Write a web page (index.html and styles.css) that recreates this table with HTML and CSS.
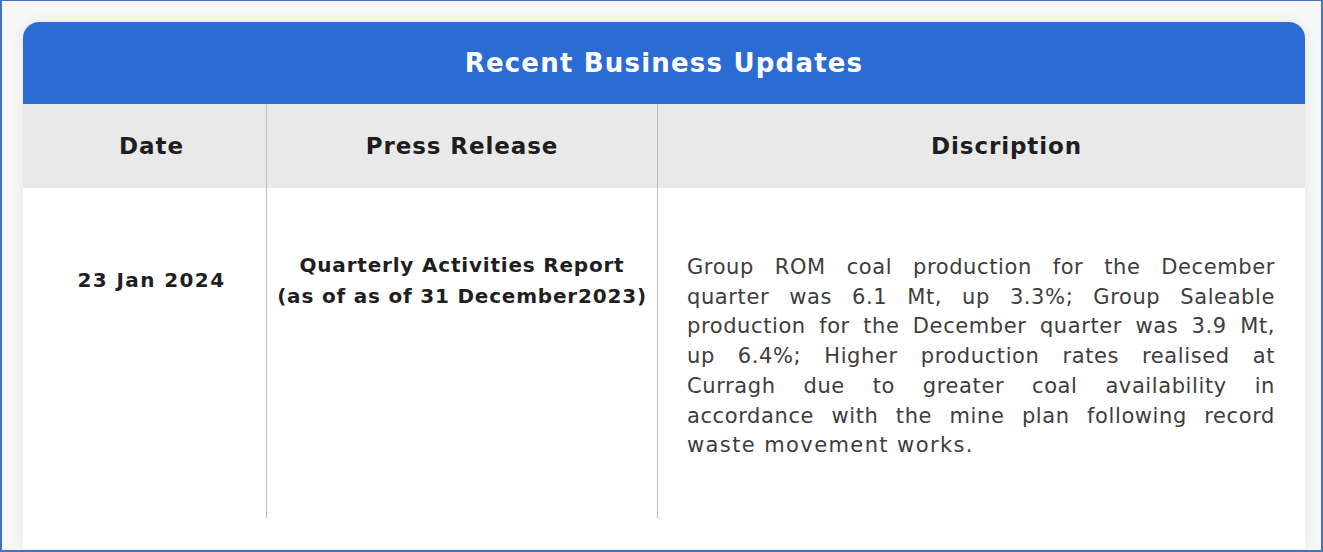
FILE: index.html
```html
<!DOCTYPE html>
<html>
<head>
<meta charset="utf-8">
<link rel="stylesheet" href="styles.css">
</head>
<body>
<div class="frame">
  <div class="card">
    <div class="title">Recent Business Updates</div>
    <div class="table">
      <div class="th c1">Date</div>
      <div class="th bl">Press Release</div>
      <div class="th bl c3">Discription</div>
      <div class="td date c1">23 Jan 2024</div>
      <div class="td press bl">Quarterly Activities Report<br>(as of as of 31 December2023)</div>
      <div class="td desc bl">
        <span class="ln">Group ROM coal production for the December</span>
        <span class="ln">quarter was 6.1 Mt, up 3.3%; Group Saleable</span>
        <span class="ln">production for the December quarter was 3.9 Mt,</span>
        <span class="ln">up 6.4%; Higher production rates realised at</span>
        <span class="ln">Curragh due to greater coal availability in</span>
        <span class="ln">accordance with the mine plan following record</span>
        <span class="ln last">waste movement works.</span>
      </div>
    </div>
  </div>
</div>
</body>
</html>
```

FILE: styles.css
```css
html, body {
  margin: 0;
  padding: 0;
}
body {
  width: 1323px;
  height: 552px;
  overflow: hidden;
  font-family: "DejaVu Sans", sans-serif;
}
.frame {
  box-sizing: border-box;
  width: 1323px;
  height: 552px;
  border: 2px solid #4472c4;
  border-top-width: 1px;
  background: #f7f7f7;
  padding: 21px 16px 0 21px;
}
.card {
  background: #ffffff;
  border-radius: 16px 16px 0 0;
  height: 527px;
  box-shadow: 0 0 14px rgba(0, 0, 0, 0.07);
}
.title {
  height: 82px;
  background: #2c6bd3;
  border-radius: 16px 16px 0 0;
  color: #ffffff;
  font-weight: bold;
  font-size: 26px;
  letter-spacing: 1.2px;
  display: flex;
  align-items: center;
  justify-content: center;
}
.table {
  display: grid;
  grid-template-columns: 243px 391px 1fr;
  grid-template-rows: 84px 330px;
}
.th {
  background: #e9e9e9;
  display: flex;
  align-items: center;
  justify-content: center;
  font-weight: bold;
  font-size: 23px;
  letter-spacing: 0.9px;
  color: #1e1e1e;
}
.c1 {
  padding-left: 14px;
}
.th.c3 {
  padding-left: 50px;
}
.bl {
  border-left: 1.5px solid #bdbdbd;
}
.td {
  color: #1f1f1f;
}
.date {
  font-weight: bold;
  font-size: 20px;
  letter-spacing: 1.4px;
  text-align: center;
  padding-top: 77px;
  line-height: 30px;
}
.press {
  font-weight: bold;
  font-size: 20px;
  letter-spacing: 0.8px;
  text-align: center;
  padding-top: 62px;
  line-height: 31px;
}
.desc {
  font-size: 21px;
  letter-spacing: 0.6px;
  color: #3d3d3d;
  line-height: 29.7px;
  padding: 65px 30px 0 29px;
}
.ln {
  display: block;
  white-space: nowrap;
  text-align: justify;
  text-align-last: justify;
}
.ln.last {
  text-align-last: left;
  letter-spacing: 1.4px;
}
```
